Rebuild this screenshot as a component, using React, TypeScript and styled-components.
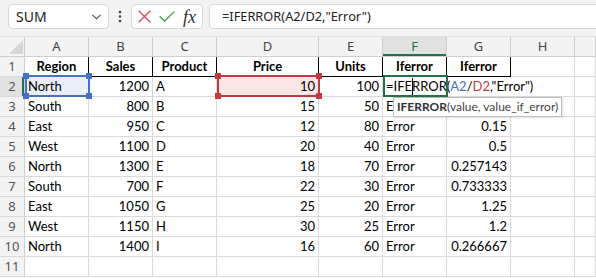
import React from 'react';
import styled, { createGlobalStyle } from 'styled-components';

const GRID = '#dadada';
const HEAD_LINE = '#cfcfcf';
const GREEN = '#217346';
const BLUE = '#4472c4';
const RED = '#c4393f';
const CELL_FONT = `Lato, "Liberation Sans", sans-serif`;
const UI_FONT = `"Noto Sans", "Open Sans", sans-serif`;

const GlobalStyle = createGlobalStyle`
  html, body { margin: 0; padding: 0; background: #fff; }
  body { overflow: hidden; }
`;

const Page = styled.div`
  width: 596px;
  height: 278px;
  overflow: hidden;
  background: #fff;
`;

const Toolbar = styled.div`
  display: flex;
  align-items: flex-start;
  height: 37px;
  box-sizing: border-box;
  padding: 4px 0 0 8px;
  background: #f3f3f3;
  border-bottom: 1px solid #e0e0e0;
`;

const RoundBox = styled.div`
  height: 25px;
  box-sizing: border-box;
  background: #fff;
  border: 1px solid #d9d9d9;
  border-radius: 4px;
  display: flex;
  align-items: center;
`;

const NameBox = styled(RoundBox)`
  width: 101px;
  justify-content: space-between;
  padding: 0 7px 0 7px;
  font: 400 14px/1 ${UI_FONT};
  color: #222;
`;

const Dots = styled.div`
  width: 22px;
  height: 25px;
  display: flex;
  align-items: center;
  justify-content: center;
`;

const ActionBox = styled(RoundBox)`
  width: 72px;
  padding: 0 0 0 6px;
  gap: 8px;
`;

const Fx = styled.span`
  font: italic 400 18px/1 "Liberation Serif", serif;
  color: #333;
  letter-spacing: 0px;
`;

const FormulaInput = styled(RoundBox)`
  flex: 1;
  margin-left: 6px;
  margin-right: -8px;
  padding-left: 12px;
  font: 400 12.8px/1 ${UI_FONT};
  color: #222;
  white-space: nowrap;
`;

const Sheet = styled.div`
  display: grid;
  grid-template-columns: 25px 64px 64px 64px 102px 64px 64px 64px 64px 21px;
  grid-auto-rows: 20px;
`;

const Corner = styled.div`
  position: relative;
  box-sizing: border-box;
  background: #f3f3f3;
  border-right: 1px solid ${HEAD_LINE};
  border-bottom: 1px solid ${HEAD_LINE};
  overflow: hidden;
  &::after {
    content: '';
    position: absolute;
    right: 1px;
    bottom: 2px;
    width: 0;
    height: 0;
    border-left: 14px solid transparent;
    border-bottom: 14px solid #d6d6d6;
  }
`;

const ColHead = styled.div<{ $active?: boolean }>`
  box-sizing: border-box;
  background: ${p => (p.$active ? '#e1e1e1' : '#f3f3f3')};
  border-right: 1px solid ${HEAD_LINE};
  border-bottom: 1px solid ${HEAD_LINE};
  box-shadow: ${p => (p.$active ? `inset 0 -2px 0 ${GREEN}` : 'none')};
  color: ${p => (p.$active ? GREEN : '#444')};
  font: 400 13px/19px ${UI_FONT};
  text-align: center;
`;

const RowHead = styled.div<{ $active?: boolean }>`
  box-sizing: border-box;
  background: ${p => (p.$active ? '#e1e1e1' : '#f3f3f3')};
  border-right: 1px solid ${HEAD_LINE};
  border-bottom: 1px solid ${GRID};
  box-shadow: ${p => (p.$active ? `inset -2px 0 0 ${GREEN}` : 'none')};
  color: #555;
  font: 400 13px/19px ${UI_FONT};
  text-align: center;
`;

type Align = 'left' | 'right' | 'center';

const Cell = styled.div<{
  $align?: Align;
  $bold?: boolean;
  $boxed?: boolean;
  $noRight?: boolean;
  $fill?: string;
  $over?: boolean;
}>`
  position: relative;
  box-sizing: border-box;
  min-width: 0;
  border-right: 1px solid ${p => (p.$boxed ? '#000' : p.$noRight ? '#fff' : GRID)};
  border-bottom: 1px solid ${p => (p.$boxed ? '#000' : GRID)};
  background: ${p => p.$fill ?? 'transparent'};
  padding: 0 3px;
  text-align: ${p => p.$align ?? 'left'};
  font: ${p => (p.$bold ? 700 : 400)} 13px/19px ${CELL_FONT};
  color: #000;
  white-space: nowrap;
  overflow: ${p => (p.$over ? 'visible' : 'hidden')};
  z-index: ${p => (p.$over ? 2 : 'auto')};
`;

const SelFrame = styled.div<{ $c: string }>`
  position: absolute;
  top: -2px;
  left: 0;
  right: -2px;
  bottom: -1px;
  border: 2px solid ${p => p.$c};
  pointer-events: none;
  z-index: 3;
`;

const Handle = styled.span<{ $c: string; $v: 'top' | 'bottom'; $h: 'left' | 'right' }>`
  position: absolute;
  width: 6px;
  height: 6px;
  background: ${p => p.$c};
  ${p => p.$v}: -4px;
  ${p => p.$h}: -4px;
`;

const Caret = styled.span`
  display: inline-block;
  width: 1px;
  height: 17px;
  background: #000;
  vertical-align: -4px;
  margin-right: -1px;
`;

const Ref = styled.span<{ $c: string }>`
  color: ${p => p.$c};
`;

const Tip = styled.div`
  position: absolute;
  left: 10px;
  top: 0;
  height: 20px;
  box-sizing: border-box;
  padding: 0 3px;
  border: 1px solid #bdbdbd;
  background: #fff;
  box-shadow: 1px 1px 2px rgba(0, 0, 0, 0.12);
  font: 400 12px/18px ${CELL_FONT};
  color: #444;
  white-space: nowrap;
  z-index: 4;
`;

const TipName = styled.b`
  font-weight: 700;
  color: #333;
`;

const Frame: React.FC<{ color: string; handles?: boolean }> = ({ color, handles }) => (
  <SelFrame $c={color}>
    {handles && (
      <>
        <Handle $c={color} $v="top" $h="left" />
        <Handle $c={color} $v="top" $h="right" />
        <Handle $c={color} $v="bottom" $h="left" />
        <Handle $c={color} $v="bottom" $h="right" />
      </>
    )}
  </SelFrame>
);

const COLS = ['A', 'B', 'C', 'D', 'E', 'F', 'G', 'H', ''];

type Row = [string, string, string, string, string, string, string];

const ROWS: Row[] = [
  ['South', '800', 'B', '15', '50', 'E', ''],
  ['East', '950', 'C', '12', '80', 'Error', '0.15'],
  ['West', '1100', 'D', '20', '40', 'Error', '0.5'],
  ['North', '1300', 'E', '18', '70', 'Error', '0.257143'],
  ['South', '700', 'F', '22', '30', 'Error', '0.733333'],
  ['East', '1050', 'G', '25', '20', 'Error', '1.25'],
  ['West', '1150', 'H', '30', '25', 'Error', '1.2'],
  ['North', '1400', 'I', '16', '60', 'Error', '0.266667'],
];

const HEADERS = ['Region', 'Sales', 'Product', 'Price', 'Units', 'Iferror', 'Iferror'];
const ALIGN: Align[] = ['left', 'right', 'left', 'right', 'right', 'left', 'right'];

const App: React.FC = () => (
  <Page>
    <GlobalStyle />
    <Toolbar>
      <NameBox>
        <span>SUM</span>
        <svg width="9" height="6" viewBox="0 0 9 6">
          <polyline points="0.5,0.8 4.5,4.8 8.5,0.8" fill="none" stroke="#444" strokeWidth="1.1" />
        </svg>
      </NameBox>
      <Dots>
        <svg width="4" height="13" viewBox="0 0 4 13">
          <circle cx="2" cy="2" r="1.3" fill="#444" />
          <circle cx="2" cy="6.5" r="1.3" fill="#444" />
          <circle cx="2" cy="11" r="1.3" fill="#444" />
        </svg>
      </Dots>
      <ActionBox>
        <svg width="13" height="13" viewBox="0 0 13 13">
          <path d="M0.7 0.7 L12.3 12.3 M12.3 0.7 L0.7 12.3" stroke="#e0474c" strokeWidth="1.3" fill="none" />
        </svg>
        <svg width="16" height="11" viewBox="0 0 16 11">
          <polyline points="0.7,5.3 5.6,10 15.3,0.6" fill="none" stroke="#3d9d4f" strokeWidth="1.3" />
        </svg>
        <Fx>fx</Fx>
      </ActionBox>
      <FormulaInput>=IFERROR(A2/D2,"Error")</FormulaInput>
    </Toolbar>

    <Sheet>
      <Corner />
      {COLS.map((c, i) => (
        <ColHead key={i} $active={c === 'F'}>
          {c}
        </ColHead>
      ))}

      <RowHead>1</RowHead>
      {HEADERS.map((h, i) => (
        <Cell key={i} $align="center" $bold $boxed>
          {h}
        </Cell>
      ))}
      <Cell />
      <Cell />

      <RowHead $active>2</RowHead>
      <Cell $fill="#e9eef8" $over>
        North
        <Frame color={BLUE} handles />
      </Cell>
      <Cell $align="right">1200</Cell>
      <Cell>A</Cell>
      <Cell $align="right" $fill="#fbe6e7" $over>
        10
        <Frame color={RED} handles />
      </Cell>
      <Cell $align="right">100</Cell>
      <Cell $over>
        =IFE
        <Caret />
        RROR(<Ref $c={BLUE}>A2</Ref>/<Ref $c={RED}>D2</Ref>,"Error")
        <Frame color={GREEN} />
      </Cell>
      <Cell $noRight />
      <Cell />
      <Cell />

      {ROWS.map((r, ri) => (
        <React.Fragment key={ri}>
          <RowHead>{ri + 3}</RowHead>
          {r.map((v, ci) =>
            ri === 0 && ci === 5 ? (
              <Cell key={ci} $over>
                {v}
                <Tip>
                  <TipName>IFERROR</TipName>(value, value_if_error)
                </Tip>
              </Cell>
            ) : (
              <Cell key={ci} $align={ALIGN[ci]}>
                {v}
              </Cell>
            ),
          )}
          <Cell />
          <Cell />
        </React.Fragment>
      ))}

      <RowHead>11</RowHead>
      {Array.from({ length: 9 }).map((_, i) => (
        <Cell key={i} />
      ))}
    </Sheet>
  </Page>
);

export default App;
